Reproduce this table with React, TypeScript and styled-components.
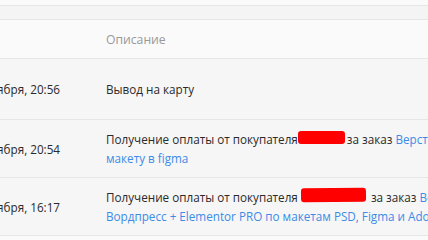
import styled, { createGlobalStyle } from 'styled-components';

const GlobalStyle = createGlobalStyle`
  html, body {
    margin: 0;
    padding: 0;
    background: #fafafa;
    overflow: hidden;
  }
  body {
    font-family: 'Open Sans', 'Liberation Sans', sans-serif;
    font-size: 11.7px;
    color: #2a2a2a;
  }
`;

type Payment = {
  date: string;
  text: string;
  buyer?: { w: number; h: number; gap?: boolean };
  order?: string;
};

const payments: Payment[] = [
  { date: '25 ноября, 20:56', text: 'Вывод на карту' },
  {
    date: '24 ноября, 20:54',
    text: 'Получение оплаты от покупателя',
    buyer: { w: 47, h: 13 },
    order: 'Верстка по макету в figma',
  },
  {
    date: '18 ноября, 16:17',
    text: 'Получение оплаты от покупателя',
    buyer: { w: 65, h: 14, gap: true },
    order: 'Вёрстка Вордпресс + Elementor PRO по макетам PSD, Figma и Adobe XD',
  },
];

function App() {
  return (
    <>
      <GlobalStyle />
      <Page>
        <TopStrip />
        <HeadRow>
          <DateCell />
          <HeadCell>Описание</HeadCell>
        </HeadRow>
        {payments.map((p, i) => (
          <Row key={i} $single={!p.buyer}>
            <DateCell>{p.date}</DateCell>
            <DescCell>
              {p.text}
              {p.buyer && (
                <>
                  {p.buyer.gap && ' '}
                  {/* buyer name is hidden under a red marker */}
                  <Buyer $w={p.buyer.w} $h={p.buyer.h} $gap={p.buyer.gap} />
                  за заказ <OrderLink href='#'>{p.order}</OrderLink>
                </>
              )}
            </DescCell>
          </Row>
        ))}
      </Page>
    </>
  );
}

const Page = styled.div`
  width: 428px;
  height: 240px;
  overflow: hidden;
  padding-top: 5px;
  box-sizing: border-box;
`;

const TopStrip = styled.div`
  height: 13px;
  background: #f4f4f4;
  border-top: 1px solid #e6e6e6;
  border-bottom: 1px solid #e6e6e6;
`;

const HeadRow = styled.div`
  display: flex;
  align-items: center;
  height: 38px;
  background: #fafafa;
  border-bottom: 1px solid #e6e6e6;
`;

const Row = styled.div<{ $single?: boolean }>`
  display: flex;
  align-items: center;
  height: ${(p) => (p.$single ? '60px' : 'auto')};
  padding: ${(p) => (p.$single ? '0' : '10px 0 9px')};
  background: #f6f6f6;
  border-bottom: 1px solid #e6e6e6;
`;

// date column is cut by the left edge, text hangs off to the left
const DateCell = styled.div`
  flex: 0 0 60px;
  min-width: 0;
  display: flex;
  justify-content: flex-end;
  white-space: nowrap;
`;

const HeadCell = styled.div`
  padding-left: 46px;
  font-size: 12.2px;
  color: #999;
`;

const DescCell = styled.div`
  flex: 0 0 380px;
  padding-left: 46px;
  line-height: 19px;
`;

const Buyer = styled.span<{ $w: number; $h: number; $gap?: boolean }>`
  display: inline-block;
  width: ${(p) => p.$w}px;
  height: ${(p) => p.$h}px;
  margin-right: ${(p) => (p.$gap ? 5 : 2)}px;
  background: #ff0000;
  border-radius: 3px;
  ${(p) => p.$gap && 'transform: rotate(-0.6deg);'}
`;

const OrderLink = styled.a`
  color: #3c8be6;
  text-decoration: none;
`;

export default App;
